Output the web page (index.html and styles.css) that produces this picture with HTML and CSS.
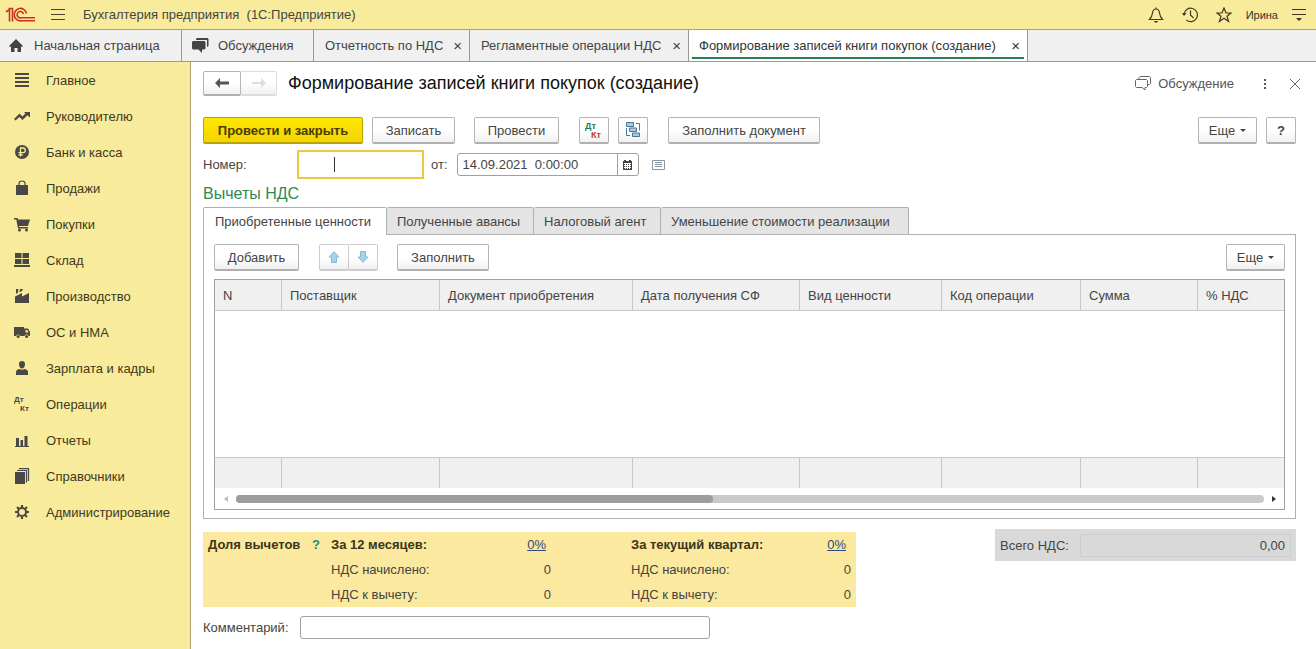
FILE: index.html
```
<!DOCTYPE html>
<html lang="ru">
<head>
    <meta charset="UTF-8">
    <meta name="viewport" content="width=device-width, initial-scale=1.0">
    <title>Бухгалтерия предприятия (1С:Предприятие)</title>
    <link rel="stylesheet" href="styles.css">
</head>
<body>
    <header class="topbar">
        <svg class="logo" width="31" height="16" viewBox="0 0 31 16" fill="none" stroke="#c8321e" stroke-width="1.600">
            <path d="M1 5 L4.500 2.500 V14.500 M3.500 1.500 H7.500 V14.500"/>
            <path d="M21.500 6.500 A6.200 6.200 0 1 0 16 13.800 H30"/>
            <path d="M18.500 7.200 A3.200 3.200 0 1 0 16 10.800 H30"/>
        </svg>
        <button class="icon-btn menu-btn" aria-label="Меню">
            <svg width="14" height="12" viewBox="0 0 14 12" stroke="#4a4528" stroke-width="1"><path d="M0 .5H14M0 5.500H14M0 10.500H14"/></svg>
        </button>
        <span class="app-title">Бухгалтерия предприятия&nbsp; (1С:Предприятие)</span>
        <div class="topbar-tools">
            <button class="icon-btn" aria-label="Уведомления">
                <svg width="16" height="16" viewBox="0 0 16 16" fill="none" stroke="#40391c" stroke-width="1.200"><path d="M8 .5V2M1.500 12.500H14.500C12.500 10.500 12 9.500 11.500 6C11.200 3.500 10 2 8 2S4.800 3.500 4.500 6C4 9.500 3.500 10.500 1.500 12.500Z"/><path d="M5.500 14H10.500L8 16Z" fill="#40391c" stroke="none"/></svg>
            </button>
            <button class="icon-btn" aria-label="История">
                <svg width="16" height="16" viewBox="0 0 16 16" fill="none" stroke="#40391c" stroke-width="1.200"><path d="M2 7.500A6.700 6.700 0 1 1 4.200 12.900M8.500 3.500V8L11.500 11"/><path d="M0 6H4.500L2 9Z" fill="#40391c" stroke="none"/></svg>
            </button>
            <button class="icon-btn" aria-label="Избранное">
                <svg width="16" height="16" viewBox="0 0 16 16" fill="none" stroke="#40391c" stroke-width="1.200"><path d="M8 1L10 6H15L11 9.200L12.600 14.500L8 11.300L3.400 14.500L5 9.200L1 6H6Z"/></svg>
            </button>
            <span class="user">Ирина</span>
            <button class="icon-btn" aria-label="Настройки">
                <svg width="14" height="13" viewBox="0 0 14 13" fill="#40391c"><path d="M0 1H14V2H0ZM0 6H14V7H0ZM4 10H10L7 13Z"/></svg>
            </button>
        </div>
    </header>

    <nav class="tabs">
        <a href="#" class="tab tab-home">
            <svg width="14" height="13" viewBox="0 0 14 13" fill="#444"><path d="M7 0L14 7L13 8L12 7.200V13H8.500V9H5.500V13H2V7.200L1 8L0 7Z"/></svg>
            Начальная страница
        </a>
        <a href="#" class="tab tab-talks">
            <svg width="17" height="15" viewBox="0 0 17 15" fill="#444"><path d="M5 0H15.500L16.500 1V8L15 9V2H4V1Z"/><path d="M1 3H12.500L13.500 4V10.500L12.500 11.500H10V15L6.500 11.500H1L0 10.500V4Z"/></svg>
            Обсуждения
        </a>
        <a href="#" class="tab tab-report">Отчетность по НДС <span class="tab-x">×</span></a>
        <a href="#" class="tab tab-routine">Регламентные операции НДС <span class="tab-x">×</span></a>
        <a href="#" class="tab active">Формирование записей книги покупок (создание) <span class="tab-x">×</span></a>
    </nav>

    <div class="layout">
        <nav class="sidebar">
            <a href="#"><svg viewBox="0 0 16 16"><path d="M1 1H15V3H1ZM1 5H15V7H1ZM1 9H15V11H1ZM1 13H15V15H1Z"/></svg>Главное</a>
            <a href="#"><svg viewBox="0 0 16 16"><path d="M0 11L5.500 5.500L8.500 8.500L11.500 5.300L10 4H16V9.500L13.500 7.200L8.500 12L5.500 9L1.500 12.500Z"/></svg>Руководителю</a>
            <a href="#"><svg viewBox="0 0 16 16"><circle cx="8" cy="8" r="7"/><path d="M6.500 12.500V4H9A2.300 2.300 0 0 1 9 8.700H4.500M4.500 10.800H9" fill="none" stroke="#f9eb9c" stroke-width="1.300"/></svg>Банк и касса</a>
            <a href="#"><svg viewBox="0 0 16 16"><path d="M2 5H14V15H2Z"/><path d="M5 7V3.500Q5 1 8 1T11 3.500V7" fill="none" stroke="#4a4844" stroke-width="1.200"/></svg>Продажи</a>
            <a href="#"><svg viewBox="0 0 16 16"><path d="M0 2H3.500L4 3.500H16L14 10H5L5.300 11H14V12.500H4L2.300 3.500H0Z"/><circle cx="5.500" cy="14" r="1.500"/><circle cx="12.500" cy="14" r="1.500"/></svg>Покупки</a>
            <a href="#"><svg viewBox="0 0 16 16"><path d="M1 1H7.500V6H1ZM8.500 1H15V6H8.500ZM1 7H7.500V12H1ZM8.500 7H15V12H8.500ZM0 13H16V15H0Z"/></svg>Склад</a>
            <a href="#"><svg viewBox="0 0 16 16"><path d="M1 15V8.500L8 5V8.500L15 5V15ZM2 1H4.500L4 4.500L2 6ZM6 1H9L8 3L5.500 4.200Z"/></svg>Производство</a>
            <a href="#"><svg viewBox="0 0 16 16"><path d="M0 3H10V4.500H14L16 8V12H14.700A2.200 2.200 0 0 0 10.600 12H6.200A2.200 2.200 0 0 0 2 12H0ZM11.500 6V8.500H14.500L13.300 6Z" fill-rule="evenodd"/><circle cx="4.100" cy="12.500" r="1.500"/><circle cx="12.600" cy="12.500" r="1.500"/></svg>ОС и НМА</a>
            <a href="#"><svg viewBox="0 0 16 16"><path d="M8 1C10.200 1 11.200 2.500 11 4.500C10.800 7 9.500 8.500 8 8.500S5.200 7 5 4.500C4.800 2.500 5.800 1 8 1ZM2 15V12Q2 9.500 5.500 9Q8 10.500 10.500 9Q14 9.500 14 12V15Z"/></svg>Зарплата и кадры</a>
            <a href="#"><svg viewBox="0 0 16 16"><text x="0" y="6">Дт</text><text x="6" y="15">Кт</text></svg>Операции</a>
            <a href="#"><svg viewBox="0 0 16 16"><path d="M1 14H15V15H1ZM2 6H5V14H2ZM6.500 8H9V14H6.500ZM10.500 4H13.500V14H10.500Z"/></svg>Отчеты</a>
            <a href="#"><svg viewBox="0 0 16 16"><path d="M1 4H11V16H1Z"/><path d="M3 2.500H12.500V14.500M5 .6H14.500V13" fill="none" stroke="#4a4844" stroke-width="1.200"/></svg>Справочники</a>
            <a href="#"><svg viewBox="0 0 16 16"><circle cx="8" cy="8" r="4" fill="none" stroke="#4a4844" stroke-width="2"/><path d="M8 1V3.500M8 12.500V15M1 8H3.500M12.500 8H15M3 3L5 5M11 11L13 13M3 13L5 11M11 5L13 3" stroke="#4a4844" stroke-width="2.200"/></svg>Администрирование</a>
        </nav>

        <main class="content">
            <div class="page-head">
                <div class="btn-group">
                    <button class="btn nav-btn" aria-label="Назад"><svg width="14" height="10" viewBox="0 0 14 10" fill="#555"><path d="M0 5L5 0V3.500H14V6.500H5V10Z"/></svg></button>
                    <button class="btn nav-btn off" aria-label="Вперед"><svg width="14" height="10" viewBox="0 0 14 10" fill="#ddd"><path d="M14 5L9 0V4H0V6H9V10Z"/></svg></button>
                </div>
                <h1>Формирование записей книги покупок (создание)</h1>
                <a href="#" class="discuss">
                    <svg width="16" height="15" viewBox="0 0 16 15" fill="none" stroke="#666"><path d="M4 3V1.500L5 .5H14.500L15.500 1.500V7.500L14.500 8.500H13"/><path d="M1.500 3.500H11.500L12.500 4.500V10.500L11.500 11.500H10V14L7 11.500H1.500L.5 10.500V4.500Z"/></svg>
                    Обсуждение
                </a>
                <button class="icon-btn" aria-label="Действия"><svg width="4" height="12" viewBox="0 0 4 12" fill="#555"><path d="M1 1H3V3H1ZM1 5H3V7H1ZM1 9H3V11H1Z"/></svg></button>
                <button class="icon-btn close-btn" aria-label="Закрыть"><svg width="10" height="10" viewBox="0 0 10 10" stroke="#666"><path d="M0 0L10 10M10 0L0 10"/></svg></button>
            </div>

            <div class="toolbar">
                <button class="btn primary">Провести и закрыть</button>
                <button class="btn save">Записать</button>
                <button class="btn post">Провести</button>
                <button class="btn square" aria-label="Дт Кт">
                    <svg class="dtkt" width="18" height="18" viewBox="0 0 18 18"><text x="0" y="8" fill="#16814a">Дт</text><text x="6" y="17" fill="#c03a3a">Кт</text></svg>
                </button>
                <button class="btn square structure" aria-label="Структура подчиненности">
                    <svg width="16" height="16" viewBox="0 0 16 16" fill="#a9cbe2" stroke="#4a7696"><path d="M1.500 .5H8.500V4.500H1.500ZM4.500 6H11.500V9.500H4.500ZM7.500 11H14.500V14.500H7.500Z"/><path d="M11 1.500H14.500V8.500M1.500 6V13.500H5" fill="none"/></svg>
                </button>
                <button class="btn fill-doc">Заполнить документ</button>
                <button class="btn more">Еще <i class="caret-down"></i></button>
                <button class="btn help">?</button>
            </div>

            <div class="doc-row">
                <label for="number">Номер:</label>
                <span class="number-box"><input type="text" id="number"><i class="text-cursor"></i></span>
                <label for="date">от:</label>
                <span class="date-box">
                    <input type="text" id="date" value="14.09.2021  0:00:00">
                    <button aria-label="Календарь"><svg width="9" height="10" viewBox="0 0 9 10"><path d="M0 1H9V10H0ZM1 0H3V1H1ZM6 0H8V1H6Z" fill="#444"/><path d="M1 3H8V9H1Z" fill="#fff"/><path d="M1 4.500H8M1 6.500H8M1 8.500H8" stroke="#444" stroke-dasharray="1 1"/></svg></button>
                </span>
                <svg width="13" height="10" viewBox="0 0 13 10" fill="none" stroke="#8495a3"><path d="M.5 .5H12.500V9.500H.5ZM3 2.500H10M3 4.500H10M3 6.500H10"/></svg>
            </div>

            <h2>Вычеты НДС</h2>

            <div class="sub-tabs">
                <button class="current">Приобретенные ценности</button>
                <button class="advances">Полученные авансы</button>
                <button class="agent">Налоговый агент</button>
                <button class="decrease">Уменьшение стоимости реализации</button>
            </div>
            <section class="panel">
                <div class="panel-bar">
                    <button class="btn add">Добавить</button>
                    <div class="btn-group arrows">
                        <button class="btn" aria-label="Вверх"><svg width="12" height="12" viewBox="0 0 12 12" fill="#a3d2ea" stroke="#84b9d6"><path d="M6 .7L11 6H8.500V11.500H3.500V6H1Z"/></svg></button>
                        <button class="btn" aria-label="Вниз"><svg width="12" height="12" viewBox="0 0 12 12" fill="#a3d2ea" stroke="#84b9d6"><path d="M6 11.300L11 6H8.500V.5H3.500V6H1Z"/></svg></button>
                    </div>
                    <button class="btn fill">Заполнить</button>
                    <button class="btn more">Еще <i class="caret-down"></i></button>
                </div>
                <div class="grid-box">
                    <table>
                        <colgroup>
                            <col class="c-n"><col class="c-supplier"><col class="c-doc"><col class="c-date"><col class="c-kind"><col class="c-code"><col class="c-sum"><col>
                        </colgroup>
                        <thead>
                            <tr>
                                <th>N</th>
                                <th>Поставщик</th>
                                <th>Документ приобретения</th>
                                <th>Дата получения СФ</th>
                                <th>Вид ценности</th>
                                <th>Код операции</th>
                                <th>Сумма</th>
                                <th>% НДС</th>
                            </tr>
                        </thead>
                        <tbody>
                            <tr><td colspan="8"></td></tr>
                        </tbody>
                        <tfoot>
                            <tr><td></td><td></td><td></td><td></td><td></td><td></td><td></td><td></td></tr>
                        </tfoot>
                    </table>
                    <div class="scroll">
                        <i class="arrow-left"></i>
                        <div class="track"><div class="thumb"></div></div>
                        <i class="arrow-right"></i>
                    </div>
                </div>
            </section>

            <div class="bottom">
                <div class="share">
                    <b>Доля вычетов <a href="#" class="hint">?</a></b>
                    <div class="period">
                        <b>За 12 месяцев:</b><a href="#">0%</a>
                        <span>НДС начислено:</span><span>0</span>
                        <span>НДС к вычету:</span><span>0</span>
                    </div>
                    <div class="period">
                        <b>За текущий квартал:</b><a href="#">0%</a>
                        <span>НДС начислено:</span><span>0</span>
                        <span>НДС к вычету:</span><span>0</span>
                    </div>
                </div>
                <div class="total">
                    <label for="total">Всего НДС:</label>
                    <input type="text" id="total" value="0,00" readonly>
                </div>
            </div>

            <div class="comment">
                <label for="comment">Комментарий:</label>
                <input type="text" id="comment">
            </div>
        </main>
    </div>
</body>
</html>
```
FILE: styles.css
```
* {
    box-sizing: border-box;
}
body {
    margin: 0;
    min-height: 100vh;
    display: flex;
    flex-direction: column;
    font-family: "Liberation Sans", Arial, sans-serif;
    font-size: 13px;
    color: #444;
    background-color: #fff;
}
button, input {
    font: inherit;
    color: inherit;
}
button {
    padding: 0;
}
a {
    color: inherit;
    text-decoration: none;
}
svg {
    display: block;
    flex: none;
}
.icon-btn {
    display: flex;
    border: 0;
    background: none;
}

/* top bar */
.topbar {
    display: flex;
    align-items: center;
    height: 30px;
    padding: 0 10px 0 5px;
    background-color: #f9eb9c;
    border-bottom: 1px solid #aaa273;
}
.menu-btn {
    margin: 0 18px 0 15px;
}
.topbar-tools {
    display: flex;
    align-items: center;
    gap: 18px;
    margin-left: auto;
}
.user {
    margin: 0 -4px;
    font-size: 11px;
    color: #333;
}

/* open windows */
.tabs {
    display: flex;
    height: 32px;
    background-color: #f0f0f0;
    border-bottom: 1px solid #999;
}
.tab {
    display: flex;
    align-items: center;
    padding: 0 7px 0 11px;
    border-right: 1px solid #999;
    white-space: nowrap;
}
.tab-home {
    gap: 11px;
    width: 182px;
    padding: 0 0 0 9px;
}
.tab-talks {
    gap: 9px;
    width: 132px;
    padding: 0 0 0 10px;
}
.tab-report {
    width: 156px;
}
.tab-routine {
    width: 219px;
}
.tab-x {
    margin-left: auto;
    font-size: 15px;
}
.tab.active {
    width: 339px;
    padding-left: 10px;
    color: #333;
    background: linear-gradient(#2c7d55, #2c7d55) no-repeat 3px 27px / calc(100% - 6px) 2px #fff;
}

.layout {
    display: flex;
    flex: 1;
}
.sidebar {
    flex: none;
    width: 191px;
    background-color: #f9eb9c;
    border-right: 1px solid #aaa273;
}
.sidebar a {
    display: flex;
    align-items: center;
    gap: 16px;
    height: 36px;
    padding-left: 14px;
    color: #40391c;
}
.sidebar svg {
    width: 16px;
    height: 16px;
    fill: #4a4844;
}
.sidebar text {
    font-size: 8px;
    font-weight: bold;
}
.content {
    flex: 1;
    min-width: 0;
    padding: 9px 20px 10px 12px;
}

/* buttons */
.btn {
    display: flex;
    align-items: center;
    justify-content: center;
    height: 27px;
    background: linear-gradient(#fff 50%, #f1f1f1);
    border: 1px solid #b5b5b5;
    border-bottom: 2px solid #b0b0b0;
    border-radius: 2px;
    white-space: nowrap;
}
.btn-group {
    display: flex;
}
.btn-group .btn + .btn {
    border-left: 0;
    border-radius: 0 2px 2px 0;
}
.nav-btn {
    width: 38px;
    height: 25px;
}
.nav-btn.off {
    width: 36px;
    border-color: #ddd;
}
.primary {
    width: 160px;
    font-weight: bold;
    color: #4a3c00;
    background: linear-gradient(#ffe600, #f2d500);
    border-color: #b8a200;
}
.save {
    width: 83px;
    margin-left: 9px;
}
.post {
    width: 85px;
    margin: 0 20px 0 19px;
}
.square {
    width: 30px;
}
.structure {
    margin: 0 20px 0 9px;
}
.dtkt {
    font-size: 9px;
    font-weight: bold;
}
.fill-doc {
    width: 152px;
}
.more {
    width: 59px;
    gap: 5px;
    margin-left: auto;
}
.help {
    width: 30px;
    margin-left: 9px;
    font-weight: bold;
}
.caret-down {
    border: 3px solid transparent;
    border-top-color: #444;
    border-bottom: 0;
}

.page-head {
    display: flex;
    align-items: center;
    height: 25px;
    margin-right: -4px;
}
h1 {
    margin: 0 auto 0 11px;
    font-size: 18px;
    font-weight: normal;
    color: #111;
}
.discuss {
    display: flex;
    align-items: center;
    gap: 7px;
    margin-right: 29px;
    color: #555;
}
.close-btn {
    margin-left: 23px;
}
.toolbar {
    display: flex;
    margin-top: 21px;
}

/* number and date */
.doc-row {
    display: flex;
    align-items: center;
    height: 29px;
    margin-top: 6px;
}
.doc-row label:first-child {
    width: 94px;
}
.number-box {
    position: relative;
    margin-right: 7px;
}
.number-box input {
    display: block;
    width: 127px;
    height: 29px;
    border: 2px solid #e8cb3f;
}
.text-cursor {
    position: absolute;
    left: 37px;
    top: 7px;
    width: 1px;
    height: 15px;
    background-color: #333;
}
.date-box {
    display: flex;
    width: 182px;
    height: 23px;
    margin: 0 13px 0 9px;
    border: 1px solid #a0a0a0;
    border-radius: 3px;
}
.date-box input {
    flex: 1;
    min-width: 0;
    padding: 0 5px;
    border: 0;
    background: none;
}
.date-box button {
    display: flex;
    align-items: center;
    justify-content: center;
    width: 21px;
    border: 0;
    border-left: 1px solid #a0a0a0;
    background: none;
}
h2 {
    margin: 5px 0 4px;
    font-size: 16px;
    line-height: 19px;
    font-weight: normal;
    color: #2b8a55;
}

/* tabular part */
.sub-tabs {
    display: flex;
}
.sub-tabs button {
    height: 27px;
    padding: 0 0 0 10px;
    text-align: left;
    white-space: nowrap;
    border: 1px solid #b0b0b0;
    border-width: 1px 1px 0 0;
    border-radius: 2px 2px 0 0;
    background-color: #e4e4e4;
}
.sub-tabs .current {
    width: 184px;
    height: 28px;
    margin-bottom: -1px;
    padding-left: 11px;
    border-left-width: 1px;
    background-color: #fff;
}
.advances {
    width: 147px;
}
.agent {
    width: 127px;
}
.decrease {
    width: 248px;
}
.panel {
    padding: 9px 10px 8px;
    border: 1px solid #b0b0b0;
}
.panel-bar {
    display: flex;
    margin-bottom: 8px;
}
.add {
    width: 85px;
}
.arrows {
    margin: 0 19px 0 20px;
}
.arrows .btn {
    width: 30px;
    border-color: #ccc;
}
.arrows .btn + .btn {
    width: 29px;
}
.fill {
    width: 92px;
}
.grid-box {
    border: 1px solid #a0a0a0;
}
table {
    width: 100%;
    table-layout: fixed;
    border-collapse: separate;
    border-spacing: 0;
}
.c-n { width: 67px; }
.c-supplier { width: 158px; }
.c-doc { width: 193px; }
.c-date { width: 167px; }
.c-kind { width: 142px; }
.c-code { width: 139px; }
.c-sum { width: 117px; }
th {
    height: 31px;
    padding: 0 8px;
    text-align: left;
    font-weight: normal;
    white-space: nowrap;
    background-color: #f0f0f0;
    border-right: 1px solid #c8c8c8;
    border-bottom: 1px solid #c8c8c8;
}
tbody td {
    height: 146px;
    padding: 0;
}
tfoot td {
    height: 31px;
    padding: 0;
    background-color: #f0f0f0;
    border-top: 1px solid #c8c8c8;
    border-right: 1px solid #c8c8c8;
}
th:last-child,
tfoot td:last-child {
    border-right: 0;
}
.scroll {
    display: flex;
    align-items: center;
    height: 21px;
    padding: 0 8px 0 9px;
}
.track {
    flex: 1;
    height: 8px;
    margin: 0 8px;
    border-radius: 4px;
    background-color: #cacaca;
}
.thumb {
    width: 46.4%;
    height: 8px;
    border-radius: 4px;
    background-color: #9d9d9d;
}
.arrow-left,
.arrow-right {
    border: 3px solid transparent;
}
.arrow-left {
    border-left: 0;
    border-right: 4px solid #bbb;
}
.arrow-right {
    border-right: 0;
    border-left: 4px solid #333;
}

/* totals */
.bottom {
    display: flex;
    justify-content: space-between;
    align-items: flex-start;
    margin-top: 10px;
}
.share {
    display: grid;
    grid-template-columns: 123px 220px 80px 220px;
    margin-top: 3px;
    padding: 0 5px;
    line-height: 25px;
    background-color: #fbe99f;
}
.share b {
    color: #3b351b;
}
.period {
    display: grid;
    grid-template-columns: 1fr auto;
}
.period:last-child {
    grid-column: 4;
}
.period a {
    margin-right: 5px;
    color: #2f4a80;
    text-decoration: underline;
}
.period span:nth-child(even) {
    text-align: right;
}
.hint {
    margin-left: 8px;
    color: #2a8a7c;
}
.total {
    display: flex;
    align-items: center;
    width: 301px;
    height: 32px;
    padding: 0 5px;
    background-color: #d9d9d9;
}
.total input {
    flex: 1;
    min-width: 0;
    height: 23px;
    margin-left: 11px;
    padding: 0 5px;
    text-align: right;
    background: none;
    border: 1px solid #cdcdcd;
    border-radius: 2px;
}
.comment {
    display: flex;
    align-items: center;
    margin-top: 9px;
}
.comment input {
    width: 410px;
    height: 23px;
    margin-left: 11px;
    border: 1px solid #a0a0a0;
    border-radius: 3px;
}
```
